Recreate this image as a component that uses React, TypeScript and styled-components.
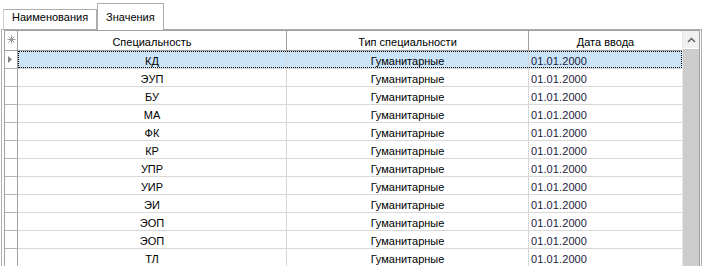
import React from 'react';
import styled, { createGlobalStyle } from 'styled-components';

const GlobalStyle = createGlobalStyle`
  html, body {
    margin: 0;
    padding: 0;
    background: #ffffff;
    overflow: hidden;
  }
  body {
    font-family: "Liberation Sans", Arial, sans-serif;
    font-size: 11px;
    color: #000;
  }
`;

const rows = [
  'КД', 'ЭУП', 'БУ', 'МА', 'ФК', 'КР', 'УПР', 'УИР', 'ЭИ', 'ЭОП', 'ЭОП', 'ТЛ', 'ПИ', 'ИС',
];

// ---- tab control ----
const TabControl = styled.div`
  width: 702px;
  height: 266px;
  display: flex;
  flex-direction: column;
  overflow: hidden;
`;

const TabStrip = styled.div`
  height: 29px;
  flex-shrink: 0;
  display: flex;
  align-items: flex-end;
  padding-left: 3px;
  position: relative;
  z-index: 1;
`;

const Tab = styled.div<{ $active?: boolean }>`
  box-sizing: border-box;
  height: ${(p) => (p.$active ? '27px' : '20px')};
  margin-bottom: ${(p) => (p.$active ? '-1px' : '0')};
  padding: ${(p) => (p.$active ? '7px 8px 0 8px' : '1px 8px 0 8px')};
  border: 1px solid #adadad;
  border-bottom: none;
  border-left: ${(p) => (p.$active ? '1px solid #adadad' : '1px solid #d0d0d0')};
  background: #ffffff;
  white-space: nowrap;
  line-height: 13px;
`;

const Panel = styled.div`
  flex: 1;
  min-height: 0;
  box-sizing: border-box;
  margin-left: 1px;
  border: 1px solid #adadad;
  border-bottom: none;
  padding: 0 1px 0 2px;
  display: flex;
`;

// ---- grid ----
const Grid = styled.div`
  flex: 1;
  border: 1px solid #a0a0a0;
  border-bottom: none;
  display: flex;
  overflow: hidden;
`;

const TableWrap = styled.div`
  position: relative;
`;

const Table = styled.div`
  display: grid;
  grid-template-columns: 13px 269px 242px 153px;
  grid-template-rows: 20px;
  grid-auto-rows: 18px;
  align-content: start;
`;

const Corner = styled.div`
  box-sizing: border-box;
  border-right: 1px solid #a0a0a0;
  border-bottom: 1px solid #a0a0a0;
  display: flex;
  align-items: center;
  justify-content: center;
  padding-bottom: 3px;
`;

const HeadCell = styled.div<{ $last?: boolean }>`
  box-sizing: border-box;
  border-right: ${(p) => (p.$last ? 'none' : '1px solid #a0a0a0')};
  border-bottom: 1px solid #a0a0a0;
  display: flex;
  align-items: center;
  justify-content: center;
  padding-top: 3px;
`;

const RowHead = styled.div`
  box-sizing: border-box;
  border-right: 1px solid #a0a0a0;
  border-bottom: 1px solid #b4b4b4;
  display: flex;
  align-items: center;
  padding-left: 3px;
`;

const Cell = styled.div<{ $align: 'center' | 'left'; $selected?: boolean; $last?: boolean }>`
  box-sizing: border-box;
  border-right: ${(p) => (p.$last ? 'none' : '1px solid #d8d8d8')};
  border-bottom: 1px solid #d8d8d8;
  background: ${(p) => (p.$selected ? '#cce4f7' : '#ffffff')};
  display: flex;
  align-items: center;
  justify-content: ${(p) => (p.$align === 'center' ? 'center' : 'flex-start')};
  padding: 2px 0 0 ${(p) => (p.$align === 'left' ? '2px' : '0')};
  white-space: nowrap;
`;

const DateText = styled.span`
  color: #1a1a40;
  letter-spacing: 0.1px;
`;

const Focus = styled.div`
  position: absolute;
  left: 13px;
  right: 0;
  top: 20px;
  height: 17px;
  border: 1px dotted #000;
  box-sizing: border-box;
  pointer-events: none;
`;

// ---- scrollbar ----
const ScrollBar = styled.div`
  width: 18px;
  box-sizing: border-box;
  border-left: 1px solid #e6e6e6;
  display: flex;
  flex-direction: column;
`;

const ScrollButton = styled.div`
  height: 17px;
  background: #f0f0f0;
  display: flex;
  align-items: center;
  justify-content: center;
`;

const ScrollThumb = styled.div`
  flex: 1;
  background: #cdcdcd;
  margin-top: 1px;
`;

const CornerMark = () => (
  <svg width="9" height="9" viewBox="0 0 9 9">
    <g stroke="#9a9a9a" strokeWidth="1">
      <line x1="4.5" y1="0.5" x2="4.5" y2="8.5" />
      <line x1="0.5" y1="4.5" x2="8.5" y2="4.5" />
      <line x1="1.5" y1="1.5" x2="7.5" y2="7.5" />
      <line x1="7.5" y1="1.5" x2="1.5" y2="7.5" />
    </g>
  </svg>
);

const Arrow = () => (
  <svg width="4" height="7" viewBox="0 0 4 7">
    <path d="M0 0 L4 3.5 L0 7 Z" fill="#808080" />
  </svg>
);

const Chevron = () => (
  <svg width="9" height="6" viewBox="0 0 9 6">
    <path d="M1 5 L4.5 1.5 L8 5" fill="none" stroke="#606060" strokeWidth="1.5" />
  </svg>
);

const App = () => {
  return (
    <>
      <GlobalStyle />
      <TabControl>
        <TabStrip>
          <Tab>Наименования</Tab>
          <Tab $active>Значения</Tab>
        </TabStrip>
        <Panel>
          <Grid>
            <TableWrap>
              <Table>
                <Corner>
                  <CornerMark />
                </Corner>
                <HeadCell>Специальность</HeadCell>
                <HeadCell>Тип специальности</HeadCell>
                <HeadCell $last>Дата ввода</HeadCell>
                {rows.map((name, i) => (
                  <React.Fragment key={i}>
                    <RowHead>{i === 0 && <Arrow />}</RowHead>
                    <Cell $align="center" $selected={i === 0}>
                      {name}
                    </Cell>
                    <Cell $align="center" $selected={i === 0}>
                      Гуманитарные
                    </Cell>
                    <Cell $align="left" $selected={i === 0} $last>
                      <DateText>01.01.2000</DateText>
                    </Cell>
                  </React.Fragment>
                ))}
              </Table>
              <Focus />
            </TableWrap>
            <ScrollBar>
              <ScrollButton>
                <Chevron />
              </ScrollButton>
              <ScrollThumb />
            </ScrollBar>
          </Grid>
        </Panel>
      </TabControl>
    </>
  );
};

export default App;
